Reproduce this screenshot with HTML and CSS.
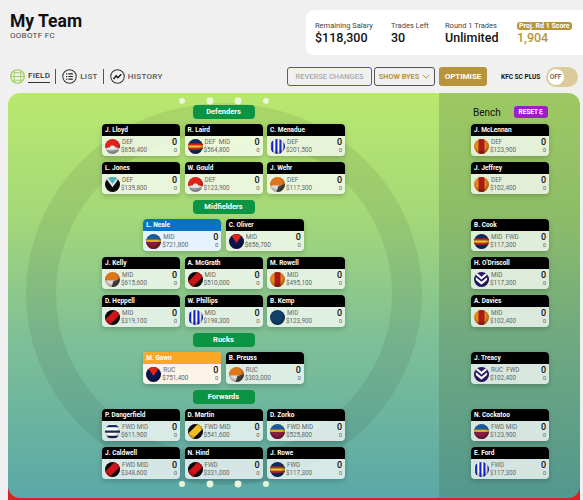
FILE: index.html
```html
<!DOCTYPE html>
<html>
<head>
	<title>My Team</title>
	<meta charset="utf-8">
	<link rel="stylesheet" href="styles.css">
</head>

<body>
<svg width="0" height="0" class="defs">
	<defs>
		<radialGradient id="shine" cx="45%" cy="40%" r="60%">
			<stop offset="55%" stop-color="#000" stop-opacity="0"/>
			<stop offset="100%" stop-color="#000" stop-opacity=".35"/>
		</radialGradient>
		<clipPath id="round"><circle cx="8" cy="8" r="8"/></clipPath>
		<symbol id="gws" viewBox="0 0 16 16"><g clip-path="url(#round)"><rect width="16" height="16" fill="#e8e8e8"/><path d="M0 0h16v9.500c-2 0-3-.5-5-.5-.5-1.600-1.600-2.200-3-2.200S5.500 7.400 5 9c-2 0-3 .5-5 .5z" fill="#e2231a"/><path d="M0 12.500c3-1.500 13-1.500 16 0V16H0z" fill="#aaa"/><circle cx="8" cy="8" r="8" fill="url(#shine)"/></g></symbol>
		<symbol id="ade" viewBox="0 0 16 16"><g clip-path="url(#round)"><rect width="16" height="16" fill="#0f2a5c"/><rect y="4.800" width="16" height="2" fill="#d8201a"/><rect y="6.800" width="16" height="2.600" fill="#f7c325"/><rect y="9.400" width="16" height="2" fill="#d8201a"/><circle cx="8" cy="8" r="8" fill="url(#shine)"/></g></symbol>
		<symbol id="nth" viewBox="0 0 16 16"><g clip-path="url(#round)"><rect width="16" height="16" fill="#fff"/><path d="M1.200 0h2.300v16H1.200zM5.700 0h2.300v16H5.700zM10 0h2.300v16H10zM14.400 0h1.600v16h-1.600z" fill="#1226c8"/><circle cx="8" cy="8" r="8" fill="url(#shine)"/></g></symbol>
		<symbol id="coll" viewBox="0 0 16 16"><g clip-path="url(#round)"><rect width="16" height="16" fill="#0a0a0a"/><path d="M0 0h16L8 11z" fill="#e8e8e8"/><path d="M2.500 0h11L8 7.500z" fill="#49b3bb"/><circle cx="8" cy="8" r="8" fill="url(#shine)"/></g></symbol>
		<symbol id="gcs" viewBox="0 0 16 16"><g clip-path="url(#round)"><rect width="16" height="16" fill="#e0761c"/><rect y="9" width="16" height="7" fill="#ddd"/><path d="M16 7.500V16H7l2-6.500z" fill="#444"/><circle cx="8" cy="8" r="8" fill="url(#shine)"/></g></symbol>
		<symbol id="bris" viewBox="0 0 16 16"><g clip-path="url(#round)"><rect width="16" height="16" fill="#1c5a9c"/><rect y="6" width="16" height="2.500" fill="#e8b020"/><rect y="8.500" width="16" height="7.500" fill="#8a1c42"/><circle cx="8" cy="8" r="8" fill="url(#shine)"/></g></symbol>
		<symbol id="melb" viewBox="0 0 16 16"><g clip-path="url(#round)"><rect width="16" height="16" fill="#0b1450"/><path d="M1.500 0h13L8 9.500z" fill="#e2231a"/><circle cx="8" cy="8" r="8" fill="url(#shine)"/></g></symbol>
		<symbol id="ess" viewBox="0 0 16 16"><g clip-path="url(#round)"><rect width="16" height="16" fill="#0a0a0a"/><path d="M-1 11.500L11.500-1 17 4 4 17z" fill="#d0141a"/><circle cx="8" cy="8" r="8" fill="url(#shine)"/></g></symbol>
		<symbol id="gold" viewBox="0 0 16 16"><g clip-path="url(#round)"><rect width="16" height="16" fill="#e8881c"/><rect x="4.800" width="6.400" height="16" fill="#a81c1c"/><circle cx="8" cy="8" r="8" fill="url(#shine)"/></g></symbol>
		<symbol id="carl" viewBox="0 0 16 16"><g clip-path="url(#round)"><rect width="16" height="16" fill="#123f68"/><circle cx="8" cy="8" r="8" fill="url(#shine)"/></g></symbol>
		<symbol id="geel" viewBox="0 0 16 16"><g clip-path="url(#round)"><rect width="16" height="16" fill="#fff"/><path d="M0 1h16v2.500H0zM0 6.800h16v2.400H0zM0 12.500h16V15H0z" fill="#1b2a5c"/><circle cx="8" cy="8" r="8" fill="url(#shine)"/></g></symbol>
		<symbol id="rich" viewBox="0 0 16 16"><g clip-path="url(#round)"><rect width="16" height="16" fill="#0a0a0a"/><path d="M-1 11.500L11.500-1 17 4 4 17z" fill="#f0c020"/><circle cx="8" cy="8" r="8" fill="url(#shine)"/></g></symbol>
		<symbol id="frem" viewBox="0 0 16 16"><g clip-path="url(#round)"><rect width="16" height="16" fill="#2b1a6c"/><path d="M2 0l6 5 6-5v3L8 8 2 3zM2 5.500l6 5 6-5v3l-6 5-6-5z" fill="#fff"/><circle cx="8" cy="8" r="8" fill="url(#shine)"/></g></symbol>
	</defs>
</svg>

<div class="top">
	<div class="title">
		<h1>My Team</h1>
		<p>OOBOTF FC</p>
	</div>
	<div class="stats">
		<div class="stat salary"><span>Remaining Salary</span><b>$118,300</b></div>
		<div class="stat left"><span>Trades Left</span><b>30</b></div>
		<div class="stat trades"><span>Round 1 Trades</span><b>Unlimited</b></div>
		<div class="stat proj"><span>Proj. Rd 1 Score</span><b>1,904</b></div>
	</div>
</div>

<div class="bar">
	<div class="tabs">
		<a class="tab on">
			<svg class="tab_ic" viewBox="0 0 16 16"><circle cx="8" cy="8" r="7.200" fill="none" stroke="#9ccc55" stroke-width="1.300"/><path d="M4.500 2.500v11M11.500 2.500v11M4.500 4h7M4.500 12h7M1 8h14" fill="none" stroke="#9ccc55" stroke-width="1"/></svg>
			<span>FIELD</span>
		</a>
		<a class="tab">
			<svg class="tab_ic" viewBox="0 0 16 16"><circle cx="8" cy="8" r="7.200" fill="none" stroke="#333" stroke-width="1.100"/><path d="M6.800 5.300h4.700M6.800 8h4.700M6.800 10.700h4.700M4.300 5.300h1.300M4.300 8h1.300M4.300 10.700h1.300" fill="none" stroke="#222" stroke-width="1.300"/></svg>
			<span>LIST</span>
		</a>
		<a class="tab">
			<svg class="tab_ic" viewBox="0 0 16 16"><circle cx="8" cy="8" r="7.200" fill="none" stroke="#333" stroke-width="1.100"/><path d="M3.800 10.600L6.600 7.200l1.800 2L12 5.600" fill="none" stroke="#111" stroke-width="1.500"/></svg>
			<span>HISTORY</span>
		</a>
	</div>
	<div class="actions">
		<a class="btn reverse">REVERSE CHANGES</a>
		<a class="btn byes">SHOW BYES <svg class="chev" viewBox="0 0 10 6"><path d="M1 1l4 4 4-4" fill="none" stroke="#b7943a" stroke-width="1.200"/></svg></a>
		<a class="btn optimise">OPTIMISE</a>
		<span class="kfc">KFC SC PLUS</span>
		<span class="toggle"><i>OFF</i></span>
	</div>
</div>

<div class="ground">
<div class="field">
	<svg class="ovals" viewBox="0 0 431 405">
		<ellipse cx="216" cy="201" rx="183" ry="176" fill="none" stroke="#000" stroke-opacity=".07" stroke-width="30"/>
	</svg>

	<div class="pitch">
		<div class="dots"><i></i><i class="big"></i><i class="big"></i><i></i></div>
		<div class="line_head">Defenders</div>
		<div class="row">
			<div class="card"><h3>J. Lloyd</h3><div class="info"><svg class="logo"><use href="#gws"/></svg><div class="meta"><span>DEF</span><span>$656,400</span></div><div class="pts"><b>0</b><span>0</span></div></div></div>
			<div class="card"><h3>R. Laird</h3><div class="info"><svg class="logo"><use href="#ade"/></svg><div class="meta"><span>DEF&nbsp; MID</span><span>$564,800</span></div><div class="pts"><b>0</b><span>0</span></div></div></div>
			<div class="card"><h3>C. Menadue</h3><div class="info"><svg class="logo"><use href="#nth"/></svg><div class="meta"><span>DEF</span><span>$201,500</span></div><div class="pts"><b>0</b><span>0</span></div></div></div>
		</div>
		<div class="row">
			<div class="card"><h3>L. Jones</h3><div class="info"><svg class="logo"><use href="#coll"/></svg><div class="meta"><span>DEF</span><span>$139,800</span></div><div class="pts"><b>0</b><span>0</span></div></div></div>
			<div class="card"><h3>W. Gould</h3><div class="info"><svg class="logo"><use href="#gws"/></svg><div class="meta"><span>DEF</span><span>$123,900</span></div><div class="pts"><b>0</b><span>0</span></div></div></div>
			<div class="card"><h3>J. Wehr</h3><div class="info"><svg class="logo"><use href="#gcs"/></svg><div class="meta"><span>DEF</span><span>$117,300</span></div><div class="pts"><b>0</b><span>0</span></div></div></div>
		</div>

		<div class="line_head">Midfielders</div>
		<div class="row">
			<div class="card capt"><h3>L. Neale</h3><div class="info"><svg class="logo"><use href="#bris"/></svg><div class="meta"><span>MID</span><span>$721,800</span></div><div class="pts"><b>0</b><span>0</span></div></div></div>
			<div class="card"><h3>C. Oliver</h3><div class="info"><svg class="logo"><use href="#melb"/></svg><div class="meta"><span>MID</span><span>$656,700</span></div><div class="pts"><b>0</b><span>0</span></div></div></div>
		</div>
		<div class="row">
			<div class="card"><h3>J. Kelly</h3><div class="info"><svg class="logo"><use href="#gcs"/></svg><div class="meta"><span>MID</span><span>$615,600</span></div><div class="pts"><b>0</b><span>0</span></div></div></div>
			<div class="card"><h3>A. McGrath</h3><div class="info"><svg class="logo"><use href="#ess"/></svg><div class="meta"><span>MID</span><span>$510,000</span></div><div class="pts"><b>0</b><span>0</span></div></div></div>
			<div class="card"><h3>M. Rowell</h3><div class="info"><svg class="logo"><use href="#gold"/></svg><div class="meta"><span>MID</span><span>$495,100</span></div><div class="pts"><b>0</b><span>0</span></div></div></div>
		</div>
		<div class="row">
			<div class="card"><h3>D. Heppell</h3><div class="info"><svg class="logo"><use href="#ess"/></svg><div class="meta"><span>MID</span><span>$319,100</span></div><div class="pts"><b>0</b><span>0</span></div></div></div>
			<div class="card"><h3>W. Phillips</h3><div class="info"><svg class="logo"><use href="#nth"/></svg><div class="meta"><span>MID</span><span>$198,300</span></div><div class="pts"><b>0</b><span>0</span></div></div></div>
			<div class="card"><h3>B. Kemp</h3><div class="info"><svg class="logo"><use href="#carl"/></svg><div class="meta"><span>MID</span><span>$123,900</span></div><div class="pts"><b>0</b><span>0</span></div></div></div>
		</div>

		<div class="line_head">Rucks</div>
		<div class="row">
			<div class="card vice"><h3>M. Gawn</h3><div class="info"><svg class="logo"><use href="#melb"/></svg><div class="meta"><span>RUC</span><span>$751,400</span></div><div class="pts"><b>0</b><span>0</span></div></div></div>
			<div class="card"><h3>B. Preuss</h3><div class="info"><svg class="logo"><use href="#gcs"/></svg><div class="meta"><span>RUC</span><span>$303,000</span></div><div class="pts"><b>0</b><span>0</span></div></div></div>
		</div>

		<div class="line_head">Forwards</div>
		<div class="row">
			<div class="card"><h3>P. Dangerfield</h3><div class="info"><svg class="logo"><use href="#geel"/></svg><div class="meta"><span>FWD MID</span><span>$611,900</span></div><div class="pts"><b>0</b><span>0</span></div></div></div>
			<div class="card"><h3>D. Martin</h3><div class="info"><svg class="logo"><use href="#rich"/></svg><div class="meta"><span>FWD MID</span><span>$541,600</span></div><div class="pts"><b>0</b><span>0</span></div></div></div>
			<div class="card"><h3>D. Zorko</h3><div class="info"><svg class="logo"><use href="#bris"/></svg><div class="meta"><span>FWD MID</span><span>$525,800</span></div><div class="pts"><b>0</b><span>0</span></div></div></div>
		</div>
		<div class="row last">
			<div class="card"><h3>J. Caldwell</h3><div class="info"><svg class="logo"><use href="#ess"/></svg><div class="meta"><span>FWD MID</span><span>$348,600</span></div><div class="pts"><b>0</b><span>0</span></div></div></div>
			<div class="card"><h3>N. Hind</h3><div class="info"><svg class="logo"><use href="#ess"/></svg><div class="meta"><span>FWD</span><span>$331,000</span></div><div class="pts"><b>0</b><span>0</span></div></div></div>
			<div class="card"><h3>J. Rowe</h3><div class="info"><svg class="logo"><use href="#ade"/></svg><div class="meta"><span>FWD</span><span>$117,300</span></div><div class="pts"><b>0</b><span>0</span></div></div></div>
		</div>
		<div class="dots"><i></i><i class="big"></i><i class="big"></i><i></i></div>
	</div>

	<div class="bench">
		<div class="bench_head"><span>Bench</span><a class="reset">RESET ℇ</a></div>
		<div class="row">
			<div class="card"><h3>J. McLennan</h3><div class="info"><svg class="logo"><use href="#gold"/></svg><div class="meta"><span>DEF</span><span>$123,900</span></div><div class="pts"><b>0</b><span>0</span></div></div></div>
		</div>
		<div class="row">
			<div class="card"><h3>J. Jeffrey</h3><div class="info"><svg class="logo"><use href="#gold"/></svg><div class="meta"><span>DEF</span><span>$102,400</span></div><div class="pts"><b>0</b><span>0</span></div></div></div>
		</div>
		<div class="line_head blank"></div>
		<div class="row">
			<div class="card"><h3>B. Cook</h3><div class="info"><svg class="logo"><use href="#ade"/></svg><div class="meta"><span>MID&nbsp; FWD</span><span>$117,300</span></div><div class="pts"><b>0</b><span>0</span></div></div></div>
		</div>
		<div class="row">
			<div class="card"><h3>H. O'Driscoll</h3><div class="info"><svg class="logo"><use href="#frem"/></svg><div class="meta"><span>MID</span><span>$117,300</span></div><div class="pts"><b>0</b><span>0</span></div></div></div>
		</div>
		<div class="row">
			<div class="card"><h3>A. Davies</h3><div class="info"><svg class="logo"><use href="#gold"/></svg><div class="meta"><span>MID</span><span>$102,400</span></div><div class="pts"><b>0</b><span>0</span></div></div></div>
		</div>
		<div class="line_head blank"></div>
		<div class="row">
			<div class="card"><h3>J. Treacy</h3><div class="info"><svg class="logo"><use href="#frem"/></svg><div class="meta"><span>RUC&nbsp; FWD</span><span>$102,400</span></div><div class="pts"><b>0</b><span>0</span></div></div></div>
		</div>
		<div class="line_head blank"></div>
		<div class="row">
			<div class="card"><h3>N. Cockatoo</h3><div class="info"><svg class="logo"><use href="#bris"/></svg><div class="meta"><span>FWD MID</span><span>$123,900</span></div><div class="pts"><b>0</b><span>0</span></div></div></div>
		</div>
		<div class="row">
			<div class="card"><h3>E. Ford</h3><div class="info"><svg class="logo"><use href="#nth"/></svg><div class="meta"><span>FWD</span><span>$117,300</span></div><div class="pts"><b>0</b><span>0</span></div></div></div>
		</div>
	</div>
</div>
</div>
</body>
</html>
```

FILE: styles.css
```css
html,body {
	height:500px;
	overflow:hidden;
}
body {
	margin:0;
	background:#f0f0f0;
	font-family:Roboto,"Liberation Sans",sans-serif;
	color:#111;
}
h1,h3,p {
	margin:0;
}
.defs {
	display:block;
	height:0;
}
.top {
	display:flex;
	justify-content:space-between;
	height:67px;
	padding:10px 0 0 10px;
	box-sizing:border-box;
}
.title h1 {
	margin-top:1px;
	font-size:17.5px;
	line-height:20px;
	font-weight:700;
}
.title p {
	font-size:8px;
	line-height:10px;
	color:#444;
	letter-spacing:.3px;
}
.stats {
	display:flex;
	width:277px;
	height:45px;
	padding:11px 0 0 9px;
	box-sizing:border-box;
	background:#fff;
	border-radius:8px 0 0 8px;
}
.stat span {
	display:block;
	font-size:7.5px;
	line-height:10px;
	color:#444;
	white-space:nowrap;
}
.stat b {
	display:block;
	font-size:12.5px;
	line-height:14px;
	font-weight:500;
}
.salary { width:76px; }
.left { width:54px; }
.trades { width:72px; }
.proj span {
	width:fit-content;
	margin:1px 0;
	background:#b7943a;
	color:#fff;
	font-weight:700;
	border-radius:3px;
	padding:0 2px;
	line-height:8px;
	height:8px;
	font-size:7px;
}
.proj b {
	color:#b7943a;
}
.bar {
	display:flex;
	justify-content:space-between;
	align-items:center;
	height:19px;
	padding:0 5px 0 10px;
}
.tabs {
	display:flex;
	align-items:center;
}
.tab {
	display:flex;
	align-items:center;
	gap:3px;
	padding-right:5px;
	margin-right:6px;
	height:15px;
	border-right:1px solid #555;
	font-size:8px;
	font-weight:500;
	color:#555;
	letter-spacing:.3px;
}
.tab:last-child {
	border-right:0;
	margin-right:0;
}
.tab.on {
	color:#333;
}
.tab.on span {
	border-bottom:1px solid #333;
	padding-bottom:2px;
}
.tab_ic {
	width:15px;
	height:15px;
}
.actions {
	display:flex;
	align-items:center;
}
.btn {
	display:flex;
	align-items:center;
	justify-content:center;
	height:19px;
	box-sizing:border-box;
	border-radius:3px;
	font-size:7.3px;
	font-weight:700;
}
.reverse {
	width:85px;
	border:1px solid #5f4fb0;
	color:#aaa;
	font-weight:500;
	font-size:7.5px;
	margin-right:2px;
}
.byes {
	width:61px;
	border:1px solid #555;
	color:#b7943a;
	gap:3px;
	margin-right:4px;
}
.chev {
	width:8px;
	height:5px;
}
.optimise {
	width:48px;
	background:#b7943a;
	color:#fff;
	margin-right:14px;
	font-size:8px;
}
.kfc {
	width:41px;
	font-size:6.5px;
	font-weight:700;
	margin-right:4px;
	white-space:nowrap;
}
.toggle {
	display:block;
	width:32px;
	height:20px;
	border-radius:10px;
	background:#dccb9a;
	padding:2px 1.5px;
	box-sizing:border-box;
}
.toggle i {
	display:block;
	width:16px;
	height:16px;
	border-radius:50%;
	background:#fff;
	font-style:normal;
	font-size:6.5px;
	font-weight:500;
	line-height:16px;
	text-align:center;
	color:#555;
}
.ground {
	width:572px;
	height:407px;
	margin:7px 0 0 8px;
	background:linear-gradient(transparent 390px,#dd2020 390px);
}
.field {
	position:relative;
	display:flex;
	height:405px;
	border-radius:12px;
	overflow:hidden;
	background:linear-gradient(#b9e86f 0%,#a5d878 30%,#7fc096 60%,#5aa8a8 100%);
}
.ovals {
	position:absolute;
	left:0;
	top:0;
	width:431px;
	height:405px;
}
.pitch {
	position:relative;
	width:431px;
	flex:none;
	box-sizing:border-box;
	padding-top:5px;
}
.dots {
	display:flex;
	justify-content:center;
	align-items:center;
	gap:22px;
	height:6.5px;
}
.dots i {
	width:6px;
	height:6px;
	border-radius:50%;
	background:#eaf5dc;
}
.dots i.big {
	transform:scale(1.15);
}
.line_head {
	width:62px;
	height:14px;
	margin:.5px auto 5px;
	border-radius:4px;
	background:#0a9444;
	color:#fff;
	font-size:7.5px;
	font-weight:700;
	line-height:14px;
	text-align:center;
}
.line_head.blank {
	background:none;
}
.row {
	display:flex;
	justify-content:center;
	gap:4.5px;
	margin-bottom:6px;
}
.row.last {
	margin-bottom:2px;
}
.card {
	width:78px;
	height:32px;
	border-radius:4px;
	overflow:hidden;
	background:rgba(255,255,255,.74);
	box-shadow:0 2px 5px rgba(0,0,0,.2);
}
.card h3 {
	height:12px;
	background:#000;
	color:#fff;
	font-size:6.5px;
	font-weight:700;
	line-height:12px;
	padding-left:3px;
	white-space:nowrap;
}
.capt { background:#e6f3fd; }
.capt h3 { background:#0a72c6; }
.vice { background:#fdf4e8; }
.vice h3 { background:#f9a825; }
.info {
	display:flex;
	align-items:center;
	height:20px;
	padding:0 3px;
}
.logo {
	width:15px;
	height:15px;
	flex:none;
	margin-right:1px;
}
.meta {
	flex:1;
	color:#666;
	font-size:6.3px;
	line-height:8.5px;
	white-space:nowrap;
}
.meta span {
	display:block;
}
.meta span:first-child {
	padding-left:1px;
}
.pts {
	text-align:right;
	color:#666;
	font-size:6px;
	line-height:8.5px;
}
.pts b {
	display:block;
	color:#111;
	font-size:9px;
	font-weight:500;
}
.pts span {
	display:block;
}
.bench {
	position:relative;
	flex:1;
	background:rgba(60,90,50,.22);
	box-sizing:border-box;
	padding-top:13px;
}
.bench .row {
	justify-content:flex-start;
	margin-left:32px;
}
.bench_head {
	display:flex;
	align-items:center;
	height:12px;
	margin:0 0 6px 34px;
	font-size:10px;
}
.bench_head span {
	width:41px;
}
.reset {
	width:34px;
	height:12px;
	border-radius:3px;
	background:#9c1fc4;
	color:#fff;
	font-size:6.5px;
	font-weight:700;
	line-height:12px;
	text-align:center;
}
```
